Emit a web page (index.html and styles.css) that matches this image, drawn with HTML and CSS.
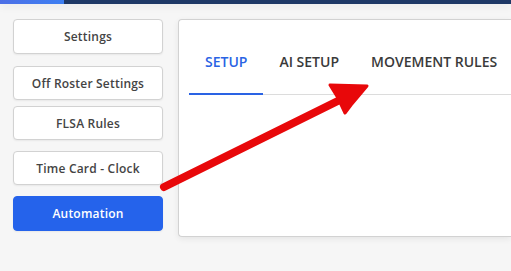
FILE: index.html
```html
<!DOCTYPE html>
<html lang="en">
<head>
    <meta charset="UTF-8">
    <meta name="viewport" content="width=device-width, initial-scale=1.0">
    <title>Automation</title>
    <link rel="stylesheet" href="styles.css">
</head>
<body>
    <div class="topbar">
        <div class="topbar-accent"></div>
    </div>

    <div class="page">
        <div class="side-menu">
            <button class="menu-btn first">Settings</button>
            <button class="menu-btn space-lg">Off Roster Settings</button>
            <button class="menu-btn space-sm">FLSA Rules</button>
            <button class="menu-btn space-lg">Time Card - Clock</button>
            <button class="menu-btn active space-lg">Automation</button>
        </div>

        <div class="card">
            <div class="tabs">
                <div class="tab selected">SETUP</div>
                <div class="tab">AI SETUP</div>
                <div class="tab">MOVEMENT RULES</div>
            </div>
        </div>
    </div>

    <!-- annotation arrow drawn over the screenshot -->
    <svg class="annotation" width="511" height="271" viewBox="0 0 511 271">
        <line x1="164" y1="187" x2="358" y2="91" stroke="#e8080a" stroke-width="8" stroke-linecap="round"/>
        <polygon points="367,86 330,85 338,98 345,113 351,105" fill="#e8080a" stroke="#e8080a" stroke-width="3" stroke-linejoin="round"/>
    </svg>
</body>
</html>
```

FILE: styles.css
```css
body {
    font-family: "Open Sans", Arial, sans-serif;
    margin: 0;
    background-color: #f6f6f6;
    width: 511px;
    height: 271px;
    overflow: hidden;
    position: relative;
}
.topbar {
    height: 4px;
    background: #1e3866;
    box-shadow: 0 2px 8px rgba(0, 0, 0, 0.08);
}
.topbar-accent {
    width: 64px;
    height: 4px;
    background: linear-gradient(to right, #4c6fe6, #3d7ff2);
}
.page {
    display: flex;
    gap: 15px;
    padding: 15px 0 0 13px;
}
.side-menu {
    display: flex;
    flex-direction: column;
    width: 150px;
    flex-shrink: 0;
}
.menu-btn {
    height: 34px;
    background: #fff;
    border: 1px solid #d2d2d2;
    border-radius: 4px;
    box-shadow: 0 1px 2px rgba(0, 0, 0, 0.06);
    font-family: "Open Sans", Arial, sans-serif;
    font-size: 12px;
    font-weight: 600;
    letter-spacing: 0.2px;
    color: #444;
    padding: 0;
}
.menu-btn.first {
    height: 35px;
}
.menu-btn.space-lg {
    margin-top: 11px;
}
.menu-btn.space-sm {
    margin-top: 6px;
}
.menu-btn.first + .menu-btn {
    margin-top: 12px;
}
.menu-btn.active {
    height: 35px;
    background: #2563eb;
    border-color: #2563eb;
    color: #fff;
}
.card {
    flex: 1;
    height: 216px;
    background: #fff;
    border: 1px solid #d2d2d2;
    border-right: none;
    border-radius: 4px 0 0 4px;
    box-shadow: 0 2px 6px rgba(0, 0, 0, 0.07);
    padding: 0 0 0 10px;
    overflow: hidden;
}
.tabs {
    display: flex;
    border-bottom: 1px solid #dcdcdc;
    margin-top: 20px;
}
.tab {
    padding: 12px 16px 22px;
    font-size: 14px;
    font-weight: 600;
    color: #3a3a3a;
    white-space: nowrap;
}
.tab.selected {
    color: #2a63e4;
    border-bottom: 2px solid #2a63e4;
    margin-bottom: -1px;
}
.annotation {
    position: absolute;
    left: 0;
    top: 0;
    pointer-events: none;
}
```
